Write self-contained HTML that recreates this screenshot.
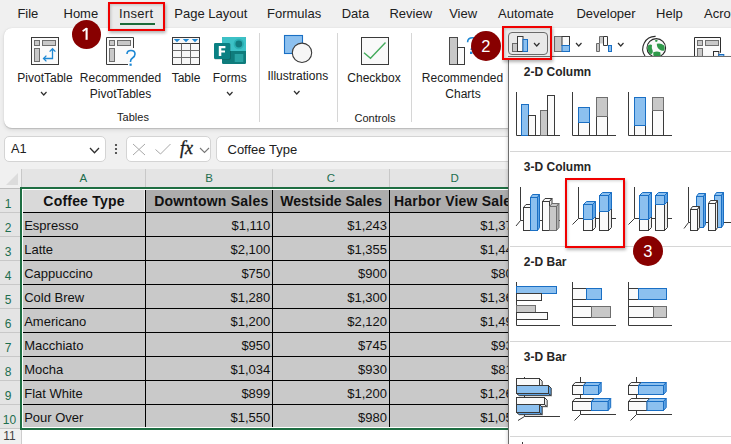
<!DOCTYPE html>
<html><head><meta charset="utf-8"><style>
html,body{margin:0;padding:0;}
body{width:731px;height:444px;overflow:hidden;position:relative;font-family:"Liberation Sans", sans-serif;background:#f0f0f0;}
.t{position:absolute;white-space:nowrap;font-family:"Liberation Sans", sans-serif;}
svg{overflow:visible}
</style></head><body>
<div style="position:absolute;left:0;top:0;width:731px;height:444px;background:#f0f0f0"></div>
<div class="t" style="left:17.40px;top:6.90px;font-size:13px;line-height:13px;color:#202020;font-weight:400;">File</div>
<div class="t" style="left:63.50px;top:6.90px;font-size:13px;line-height:13px;color:#202020;font-weight:400;">Home</div>
<div class="t" style="left:118.90px;top:6.90px;font-size:13px;line-height:13px;color:#202020;font-weight:400;">Insert</div>
<div class="t" style="left:174.30px;top:6.90px;font-size:13px;line-height:13px;color:#202020;font-weight:400;">Page Layout</div>
<div class="t" style="left:267.00px;top:6.90px;font-size:13px;line-height:13px;color:#202020;font-weight:400;">Formulas</div>
<div class="t" style="left:341.70px;top:6.90px;font-size:13px;line-height:13px;color:#202020;font-weight:400;">Data</div>
<div class="t" style="left:389.40px;top:6.90px;font-size:13px;line-height:13px;color:#202020;font-weight:400;">Review</div>
<div class="t" style="left:449.20px;top:6.90px;font-size:13px;line-height:13px;color:#202020;font-weight:400;">View</div>
<div class="t" style="left:498.10px;top:6.90px;font-size:13px;line-height:13px;color:#202020;font-weight:400;">Automate</div>
<div class="t" style="left:576.40px;top:6.90px;font-size:13px;line-height:13px;color:#202020;font-weight:400;">Developer</div>
<div class="t" style="left:656.10px;top:6.90px;font-size:13px;line-height:13px;color:#202020;font-weight:400;">Help</div>
<div class="t" style="left:704.10px;top:6.90px;font-size:13px;line-height:13px;color:#202020;font-weight:400;">Acrobat</div>
<div style="position:absolute;left:4px;top:28px;width:740px;height:100px;background:#fff;border-radius:8px;box-shadow:0 2px 4px rgba(0,0,0,0.10), 0 0.5px 1px rgba(0,0,0,0.16);"></div>
<div style="position:absolute;left:259px;top:33px;width:1px;height:89px;background:#d6d6d6;"></div>
<div style="position:absolute;left:337px;top:33px;width:1px;height:89px;background:#d6d6d6;"></div>
<div style="position:absolute;left:411px;top:33px;width:1px;height:89px;background:#d6d6d6;"></div>
<div class="t" style="left:-15.00px;width:120px;top:71.84px;font-size:12px;line-height:12px;color:#202020;font-weight:400;text-align:center;">PivotTable</div>
<div class="t" style="left:60.50px;width:120px;top:71.84px;font-size:12px;line-height:12px;color:#202020;font-weight:400;text-align:center;">Recommended</div>
<div class="t" style="left:60.50px;width:120px;top:88.24px;font-size:12px;line-height:12px;color:#202020;font-weight:400;text-align:center;">PivotTables</div>
<div class="t" style="left:126.00px;width:120px;top:71.84px;font-size:12px;line-height:12px;color:#202020;font-weight:400;text-align:center;">Table</div>
<div class="t" style="left:169.70px;width:120px;top:71.84px;font-size:12px;line-height:12px;color:#202020;font-weight:400;text-align:center;">Forms</div>
<div class="t" style="left:237.80px;width:120px;top:70.24px;font-size:12px;line-height:12px;color:#202020;font-weight:400;text-align:center;">Illustrations</div>
<div class="t" style="left:314.00px;width:120px;top:71.84px;font-size:12px;line-height:12px;color:#202020;font-weight:400;text-align:center;">Checkbox</div>
<div class="t" style="left:402.50px;width:120px;top:71.84px;font-size:12px;line-height:12px;color:#202020;font-weight:400;text-align:center;">Recommended</div>
<div class="t" style="left:403.00px;width:120px;top:87.84px;font-size:12px;line-height:12px;color:#202020;font-weight:400;text-align:center;">Charts</div>
<div class="t" style="left:73.00px;width:120px;top:112.49px;font-size:11px;line-height:11px;color:#202020;font-weight:400;text-align:center;">Tables</div>
<div class="t" style="left:315.00px;width:120px;top:112.69px;font-size:11px;line-height:11px;color:#202020;font-weight:400;text-align:center;">Controls</div>
<svg style="position:absolute;left:40.45px;top:90.5px" width="7.5" height="5" viewBox="0 0 7.5 5"><path d="M1 1 L3.75 4 L6.5 1" fill="none" stroke="#303030" stroke-width="1.2"/></svg>
<svg style="position:absolute;left:225.95px;top:90.5px" width="7.5" height="5" viewBox="0 0 7.5 5"><path d="M1 1 L3.75 4 L6.5 1" fill="none" stroke="#303030" stroke-width="1.2"/></svg>
<svg style="position:absolute;left:293.45px;top:89.5px" width="7.5" height="5" viewBox="0 0 7.5 5"><path d="M1 1 L3.75 4 L6.5 1" fill="none" stroke="#303030" stroke-width="1.2"/></svg>
<svg style="position:absolute;left:31px;top:37px" width="28" height="28" viewBox="0 0 28 28"><rect x="0.5" y="0.5" width="27" height="27" fill="#fafafa" stroke="#3a3a3a"/>
<rect x="3.5" y="3.5" width="5" height="5" fill="#c8c8c8" stroke="#6e6e6e"/>
<rect x="11.5" y="3.5" width="13" height="5" fill="#c8c8c8" stroke="#6e6e6e"/>
<rect x="3.5" y="11.5" width="5" height="13" fill="#c8c8c8" stroke="#6e6e6e"/>
<path d="M12.5 21.5 H21.5 V11.8 M18.6 14.6 L21.5 11.7 L24.4 14.6 M15.4 18.6 L12.5 21.5 L15.4 24.4" fill="none" stroke="#1e88d4" stroke-width="1.3"/></svg>
<svg style="position:absolute;left:106px;top:37px" width="32" height="31" viewBox="0 0 32 31"><path d="M27.5 11 V0.5 H0.5 V27.5 H22" fill="#fafafa" stroke="#3a3a3a"/>
<rect x="3.5" y="3.5" width="5" height="5" fill="#c8c8c8" stroke="#6e6e6e"/>
<rect x="11.5" y="3.5" width="13" height="5" fill="#c8c8c8" stroke="#6e6e6e"/>
<rect x="3.5" y="11.5" width="5" height="13" fill="#c8c8c8" stroke="#6e6e6e"/>
<path d="M21 17 Q21 13.5 25 13.5 Q29 13.5 29 17 Q29 19.5 26.5 21 Q24.5 22.3 24.5 24.5 V25" fill="none" stroke="#1e88d4" stroke-width="1.6"/>
<rect x="23.5" y="26.6" width="2.2" height="2.2" fill="#1e88d4"/></svg>
<svg style="position:absolute;left:172px;top:37px" width="28" height="28" viewBox="0 0 28 28"><rect x="0.5" y="0.5" width="27" height="27" fill="#f7f7f7" stroke="#3a3a3a"/>
<path d="M0.5 6.5 H27.5" stroke="#3a3a3a"/>
<path d="M9.5 6.5 V27.5 M18.5 6.5 V27.5 M0.5 13.5 H27.5 M0.5 20.5 H27.5" stroke="#6a6a6a"/>
<path d="M1.8 2 H8.2 L5 5.3Z M10.8 2 H17.2 L14 5.3Z M19.8 2 H26.2 L23 5.3Z" fill="#1e88d4"/></svg>
<svg style="position:absolute;left:213px;top:36px" width="34" height="29" viewBox="0 0 34 29"><rect x="9" y="1" width="24" height="27" rx="1.2" fill="#0f7c7c"/>
<path d="M10.2 1 H31.8 A1.2 1.2 0 0 1 33 2.2 V15 H9 V2.2 A1.2 1.2 0 0 1 10.2 1Z" fill="#3cc1c6"/>
<circle cx="25.8" cy="8" r="5.2" fill="#2ab0b4"/>
<circle cx="25.8" cy="8" r="3.4" fill="#127c80"/>
<rect x="21.7" y="18" width="8.6" height="8" fill="#28a3a3"/>
<rect x="1.6" y="7.6" width="16" height="16" rx="1.2" fill="rgba(0,0,0,0.25)"/><rect x="1" y="7" width="16" height="16" rx="1.2" fill="#0a8083"/>
<path d="M5.8 10 H12.4 V12.2 H8.3 V14.4 H12 V16.5 H8.3 V20.1 H5.8Z" fill="#fff"/></svg>
<svg style="position:absolute;left:283px;top:34px" width="30" height="30" viewBox="0 0 30 30"><rect x="1.5" y="1.5" width="18" height="18" fill="#8cc0ef" stroke="#1a6fc4" stroke-width="1.1"/>
<circle cx="19" cy="18.8" r="9.7" fill="#f6f6f6" stroke="#3a3a3a" stroke-width="1.1"/></svg>
<svg style="position:absolute;left:361px;top:37px" width="28" height="28" viewBox="0 0 28 28"><rect x="0.5" y="0.5" width="27" height="27" fill="#f9f9f9" stroke="#3a3a3a"/>
<path d="M3 15.8 L9.5 21.3 L24.5 5.5" fill="none" stroke="#44aa5c" stroke-width="1.4"/></svg>
<svg style="position:absolute;left:448px;top:36px" width="34" height="30" viewBox="0 0 34 30"><rect x="1.5" y="1.5" width="8" height="27" fill="#c8c8c8" stroke="#4a4a4a"/>
<rect x="9.5" y="11.5" width="7" height="17" fill="#fafafa" stroke="#3a3a3a"/>
<path d="M19.6 6.3 Q19.6 1.8 24.5 1.8 Q29.5 1.8 29.5 6 Q29.5 8.8 26.5 10.3 Q23.2 12 23.2 14" fill="none" stroke="#1e88d4" stroke-width="1.6"/>
<rect x="22" y="15.6" width="2.4" height="2.4" fill="#1e88d4"/></svg>
<svg style="position:absolute;left:553px;top:35px" width="18" height="18" viewBox="0 0 18 18"><rect x="1.5" y="1.5" width="8" height="15" fill="#c8c8c8" stroke="#6a6a6a"/>
<rect x="9" y="1.5" width="7.5" height="9" fill="#fafafa" stroke="#3a3a3a"/>
<rect x="9" y="10.5" width="7.5" height="6" fill="#8cc0ef" stroke="#1a6fc4"/></svg>
<svg style="position:absolute;left:574.55px;top:41.7px" width="7.5" height="5" viewBox="0 0 7.5 5"><path d="M1 1 L3.75 4 L6.5 1" fill="none" stroke="#303030" stroke-width="1.2"/></svg>
<svg style="position:absolute;left:595px;top:35px" width="18" height="18" viewBox="0 0 18 18"><path d="M1.5 16.5 V8.5 H4.5 V16.5Z" fill="#c8c8c8" stroke="#6a6a6a"/>
<path d="M4.5 8.5 V1.5 H8.5 V8.5" fill="#c8c8c8" stroke="#6a6a6a"/>
<path d="M8.5 1.5 H12.5 V10.5 H8.5Z" fill="#fafafa" stroke="#3a3a3a"/>
<rect x="13.5" y="10.5" width="3" height="6" fill="#8cc0ef" stroke="#1a6fc4"/></svg>
<svg style="position:absolute;left:616.55px;top:41.7px" width="7.5" height="5" viewBox="0 0 7.5 5"><path d="M1 1 L3.75 4 L6.5 1" fill="none" stroke="#303030" stroke-width="1.2"/></svg>
<svg style="position:absolute;left:641px;top:34px" width="28" height="24" viewBox="0 0 28 24"><path d="M14.6 2.4 A12.5 12.5 0 0 0 4 22" fill="none" stroke="#2a2a2a" stroke-width="1.1"/>
<circle cx="15.3" cy="13.9" r="9.3" fill="#fafafa" stroke="#2a2a2a" stroke-width="1.1"/>
<path d="M7 11.5 Q9.5 9.8 11 11 Q10.2 14 11.8 17 Q12.2 19.5 10 20.5 Q7 18.5 6.5 15Z M15.8 9.8 Q19.5 8.5 23.2 11.5 Q24.3 14.5 23.3 16.5 Q20.5 17.2 18.5 15.5 Q15.8 14 15.8 9.8Z M12.3 18.2 Q16 17 19.3 18.2 Q20.3 21 18.5 23.5 Q14.5 24 12.3 21.5Z M14.2 6 Q16 5.3 16.8 6.8 Q15.8 8.6 14.2 7.6Z" fill="#2f9a4a"/></svg>
<svg style="position:absolute;left:693px;top:36px" width="36" height="24" viewBox="0 0 36 24"><path d="M27.5 16.8 V1.5 H1.5 V25.5" fill="#fafafa" stroke="#2e2e2e"/>
<rect x="4.5" y="4.5" width="5" height="5" fill="#c8c8c8" stroke="#6e6e6e"/>
<rect x="12.5" y="4.5" width="13" height="5" fill="#c8c8c8" stroke="#6e6e6e"/>
<rect x="4.5" y="12.5" width="5" height="12" fill="#c8c8c8" stroke="#6e6e6e"/>
<rect x="20.5" y="15.5" width="5.3" height="9" fill="#fafafa" stroke="#2e2e2e"/>
<rect x="25.8" y="18.5" width="5" height="6" fill="#8cc0ef" stroke="#1a6fc4"/></svg>
<div style="position:absolute;left:4.3px;top:136px;width:101.3px;height:26px;background:#fff;border:1px solid #d4d4d4;border-radius:5px;box-sizing:border-box;"></div>
<div class="t" style="left:11.00px;top:143.06px;font-size:12.8px;line-height:12.8px;color:#202020;font-weight:400;">A1</div>
<svg style="position:absolute;left:89.1px;top:147.0px" width="11" height="6.8" viewBox="0 0 11 6.8"><path d="M1 1 L5.5 5.8 L10 1" fill="none" stroke="#303030" stroke-width="1.3"/></svg>
<svg style="position:absolute;left:114px;top:143px" width="4" height="12" viewBox="0 0 4 12"><circle cx="2" cy="2" r="1.1" fill="#333"/><circle cx="2" cy="6" r="1.1" fill="#333"/><circle cx="2" cy="10" r="1.1" fill="#333"/></svg>
<div style="position:absolute;left:126.3px;top:136px;width:85px;height:26px;background:#fff;border:1px solid #d4d4d4;border-radius:5px;box-sizing:border-box;"></div>
<svg style="position:absolute;left:132px;top:143px" width="14" height="13" viewBox="0 0 14 13"><path d="M1 1 L13 12 M13 1 L1 12" stroke="#a8a8a8" stroke-width="1"/></svg>
<svg style="position:absolute;left:154px;top:143px" width="18" height="13" viewBox="0 0 18 13"><path d="M1.5 6.5 L6.5 11 L16.5 1" fill="none" stroke="#a8a8a8" stroke-width="1"/></svg>
<div class="t" style="left:180px;top:139px;font-family:'Liberation Serif',serif;font-style:italic;font-size:18px;line-height:18px;color:#1a1a1a;-webkit-text-stroke:0.35px #1a1a1a">fx</div>
<svg style="position:absolute;left:199.1px;top:146.95px" width="11" height="6.5" viewBox="0 0 11 6.5"><path d="M1 1 L5.5 5.5 L10 1" fill="none" stroke="#777" stroke-width="1.1"/></svg>
<div style="position:absolute;left:216.3px;top:136px;width:600px;height:26px;background:#fff;border:1px solid #d4d4d4;border-radius:5px;box-sizing:border-box;"></div>
<div class="t" style="left:227.50px;top:142.90px;font-size:13px;line-height:13px;color:#202020;font-weight:400;">Coffee Type</div>
<div style="position:absolute;left:0px;top:169px;width:731px;height:19px;background:#e4e4e4;"></div>
<div style="position:absolute;left:0px;top:169px;width:21px;height:19px;background:#f0f0f0;"></div>
<svg style="position:absolute;left:6px;top:173px" width="13" height="12" viewBox="0 0 13 12"><path d="M12 0 V12 H0Z" fill="#dcdcdc"/></svg>
<div style="position:absolute;left:145px;top:169px;width:1px;height:19px;background:#c8c8c8;"></div>
<div class="t" style="left:63.25px;width:40px;top:173.27px;font-size:11.5px;line-height:11.5px;color:#1e6e4e;font-weight:400;text-align:center;">A</div>
<div style="position:absolute;left:272px;top:169px;width:1px;height:19px;background:#c8c8c8;"></div>
<div class="t" style="left:189.00px;width:40px;top:173.27px;font-size:11.5px;line-height:11.5px;color:#1e6e4e;font-weight:400;text-align:center;">B</div>
<div style="position:absolute;left:389px;top:169px;width:1px;height:19px;background:#c8c8c8;"></div>
<div class="t" style="left:311.00px;width:40px;top:173.27px;font-size:11.5px;line-height:11.5px;color:#1e6e4e;font-weight:400;text-align:center;">C</div>
<div style="position:absolute;left:520px;top:169px;width:1px;height:19px;background:#c8c8c8;"></div>
<div class="t" style="left:434.75px;width:40px;top:173.27px;font-size:11.5px;line-height:11.5px;color:#1e6e4e;font-weight:400;text-align:center;">D</div>
<div style="position:absolute;left:21px;top:169px;width:1px;height:19px;background:#c8c8c8;"></div>
<div style="position:absolute;left:0px;top:188px;width:21px;height:256px;background:#e4e4e4;"></div>
<div style="position:absolute;left:0px;top:428px;width:21px;height:16px;background:#f0f0f0;"></div>
<div style="position:absolute;left:21px;top:429px;width:1px;height:15px;background:#cdcdcd;"></div>
<div style="position:absolute;left:0px;top:188px;width:21px;height:1px;background:#c8c8c8;"></div>
<div class="t" style="left:-1.80px;width:20px;top:197.84px;font-size:12px;line-height:12px;color:#1e6e4e;font-weight:400;text-align:center;">1</div>
<div style="position:absolute;left:0px;top:212px;width:21px;height:1px;background:#c8c8c8;"></div>
<div class="t" style="left:-1.80px;width:20px;top:221.84px;font-size:12px;line-height:12px;color:#1e6e4e;font-weight:400;text-align:center;">2</div>
<div style="position:absolute;left:0px;top:236px;width:21px;height:1px;background:#c8c8c8;"></div>
<div class="t" style="left:-1.80px;width:20px;top:245.84px;font-size:12px;line-height:12px;color:#1e6e4e;font-weight:400;text-align:center;">3</div>
<div style="position:absolute;left:0px;top:260px;width:21px;height:1px;background:#c8c8c8;"></div>
<div class="t" style="left:-1.80px;width:20px;top:269.84px;font-size:12px;line-height:12px;color:#1e6e4e;font-weight:400;text-align:center;">4</div>
<div style="position:absolute;left:0px;top:284px;width:21px;height:1px;background:#c8c8c8;"></div>
<div class="t" style="left:-1.80px;width:20px;top:293.84px;font-size:12px;line-height:12px;color:#1e6e4e;font-weight:400;text-align:center;">5</div>
<div style="position:absolute;left:0px;top:308px;width:21px;height:1px;background:#c8c8c8;"></div>
<div class="t" style="left:-1.80px;width:20px;top:317.84px;font-size:12px;line-height:12px;color:#1e6e4e;font-weight:400;text-align:center;">6</div>
<div style="position:absolute;left:0px;top:332px;width:21px;height:1px;background:#c8c8c8;"></div>
<div class="t" style="left:-1.80px;width:20px;top:341.84px;font-size:12px;line-height:12px;color:#1e6e4e;font-weight:400;text-align:center;">7</div>
<div style="position:absolute;left:0px;top:356px;width:21px;height:1px;background:#c8c8c8;"></div>
<div class="t" style="left:-1.80px;width:20px;top:365.84px;font-size:12px;line-height:12px;color:#1e6e4e;font-weight:400;text-align:center;">8</div>
<div style="position:absolute;left:0px;top:380px;width:21px;height:1px;background:#c8c8c8;"></div>
<div class="t" style="left:-1.80px;width:20px;top:389.84px;font-size:12px;line-height:12px;color:#1e6e4e;font-weight:400;text-align:center;">9</div>
<div style="position:absolute;left:0px;top:404px;width:21px;height:1px;background:#c8c8c8;"></div>
<div class="t" style="left:-0.50px;width:20px;top:413.84px;font-size:12px;line-height:12px;color:#1e6e4e;font-weight:400;text-align:center;">10</div>
<div style="position:absolute;left:0px;top:428px;width:21px;height:1px;background:#c8c8c8;"></div>
<div class="t" style="left:-0.50px;width:20px;top:430.44px;font-size:12px;line-height:12px;color:#404040;font-weight:400;text-align:center;">11</div>
<div style="position:absolute;left:0px;top:188px;width:21px;height:1px;background:#bdbdbd;"></div>
<div style="position:absolute;left:22px;top:188px;width:709px;height:256px;background:#fff;"></div>
<div style="position:absolute;left:23px;top:190px;width:122px;height:22px;background:#d9d9d9;border-right:1px solid #e9e9e9;box-sizing:border-box;"></div>
<div style="position:absolute;left:146px;top:190px;width:400px;height:22px;background:#adadad;"></div>
<div style="position:absolute;left:23px;top:213px;width:500px;height:214px;background:#c9c9c9;"></div>
<div style="position:absolute;left:23px;top:212px;width:500px;height:1px;background:#000;"></div>
<div style="position:absolute;left:23px;top:236px;width:500px;height:1px;background:#000;"></div>
<div style="position:absolute;left:23px;top:260px;width:500px;height:1px;background:#000;"></div>
<div style="position:absolute;left:23px;top:284px;width:500px;height:1px;background:#000;"></div>
<div style="position:absolute;left:23px;top:308px;width:500px;height:1px;background:#000;"></div>
<div style="position:absolute;left:23px;top:332px;width:500px;height:1px;background:#000;"></div>
<div style="position:absolute;left:23px;top:356px;width:500px;height:1px;background:#000;"></div>
<div style="position:absolute;left:23px;top:380px;width:500px;height:1px;background:#000;"></div>
<div style="position:absolute;left:23px;top:404px;width:500px;height:1px;background:#000;"></div>
<div style="position:absolute;left:145.0px;top:190px;width:1px;height:237px;background:#000;"></div>
<div style="position:absolute;left:272.0px;top:190px;width:1px;height:237px;background:#000;"></div>
<div style="position:absolute;left:389.0px;top:190px;width:1px;height:237px;background:#000;"></div>
<div style="position:absolute;left:20px;top:187px;width:520px;height:2px;background:#1e6e42;"></div>
<div style="position:absolute;left:20px;top:187px;width:2px;height:243px;background:#1e6e42;"></div>
<div style="position:absolute;left:20px;top:428px;width:520px;height:2px;background:#1e6e42;"></div>
<div class="t" style="left:22.00px;width:124px;top:193.85px;font-size:14px;line-height:14px;color:#111;font-weight:700;text-align:center;letter-spacing:0.2px;">Coffee Type</div>
<div class="t" style="left:141.30px;width:140px;top:193.85px;font-size:14px;line-height:14px;color:#111;font-weight:700;text-align:center;letter-spacing:0.22px;">Downtown Sales</div>
<div class="t" style="left:261.20px;width:140px;top:193.85px;font-size:14px;line-height:14px;color:#111;font-weight:700;text-align:center;">Westside Sales</div>
<div class="t" style="left:394.00px;top:193.85px;font-size:14px;line-height:14px;color:#111;font-weight:700;letter-spacing:0.2px;">Harbor View Sales</div>
<div class="t" style="left:24.20px;top:219.00px;font-size:13px;line-height:13px;color:#111;font-weight:400;">Espresso</div>
<div class="t" style="right:460.70px;top:219.00px;font-size:13px;line-height:13px;color:#111;font-weight:400;text-align:right;">$1,110</div>
<div class="t" style="right:344.00px;top:219.00px;font-size:13px;line-height:13px;color:#111;font-weight:400;text-align:right;">$1,243</div>
<div class="t" style="right:211.00px;top:219.00px;font-size:13px;line-height:13px;color:#111;font-weight:400;text-align:right;">$1,375</div>
<div class="t" style="left:24.20px;top:243.00px;font-size:13px;line-height:13px;color:#111;font-weight:400;">Latte</div>
<div class="t" style="right:460.70px;top:243.00px;font-size:13px;line-height:13px;color:#111;font-weight:400;text-align:right;">$2,100</div>
<div class="t" style="right:344.00px;top:243.00px;font-size:13px;line-height:13px;color:#111;font-weight:400;text-align:right;">$1,355</div>
<div class="t" style="right:211.00px;top:243.00px;font-size:13px;line-height:13px;color:#111;font-weight:400;text-align:right;">$1,440</div>
<div class="t" style="left:24.20px;top:267.00px;font-size:13px;line-height:13px;color:#111;font-weight:400;">Cappuccino</div>
<div class="t" style="right:460.70px;top:267.00px;font-size:13px;line-height:13px;color:#111;font-weight:400;text-align:right;">$750</div>
<div class="t" style="right:344.00px;top:267.00px;font-size:13px;line-height:13px;color:#111;font-weight:400;text-align:right;">$900</div>
<div class="t" style="right:211.00px;top:267.00px;font-size:13px;line-height:13px;color:#111;font-weight:400;text-align:right;">$800</div>
<div class="t" style="left:24.20px;top:291.00px;font-size:13px;line-height:13px;color:#111;font-weight:400;">Cold Brew</div>
<div class="t" style="right:460.70px;top:291.00px;font-size:13px;line-height:13px;color:#111;font-weight:400;text-align:right;">$1,280</div>
<div class="t" style="right:344.00px;top:291.00px;font-size:13px;line-height:13px;color:#111;font-weight:400;text-align:right;">$1,300</div>
<div class="t" style="right:211.00px;top:291.00px;font-size:13px;line-height:13px;color:#111;font-weight:400;text-align:right;">$1,360</div>
<div class="t" style="left:24.20px;top:315.00px;font-size:13px;line-height:13px;color:#111;font-weight:400;">Americano</div>
<div class="t" style="right:460.70px;top:315.00px;font-size:13px;line-height:13px;color:#111;font-weight:400;text-align:right;">$1,200</div>
<div class="t" style="right:344.00px;top:315.00px;font-size:13px;line-height:13px;color:#111;font-weight:400;text-align:right;">$2,120</div>
<div class="t" style="right:211.00px;top:315.00px;font-size:13px;line-height:13px;color:#111;font-weight:400;text-align:right;">$1,490</div>
<div class="t" style="left:24.20px;top:339.00px;font-size:13px;line-height:13px;color:#111;font-weight:400;">Macchiato</div>
<div class="t" style="right:460.70px;top:339.00px;font-size:13px;line-height:13px;color:#111;font-weight:400;text-align:right;">$950</div>
<div class="t" style="right:344.00px;top:339.00px;font-size:13px;line-height:13px;color:#111;font-weight:400;text-align:right;">$745</div>
<div class="t" style="right:211.00px;top:339.00px;font-size:13px;line-height:13px;color:#111;font-weight:400;text-align:right;">$930</div>
<div class="t" style="left:24.20px;top:363.00px;font-size:13px;line-height:13px;color:#111;font-weight:400;">Mocha</div>
<div class="t" style="right:460.70px;top:363.00px;font-size:13px;line-height:13px;color:#111;font-weight:400;text-align:right;">$1,034</div>
<div class="t" style="right:344.00px;top:363.00px;font-size:13px;line-height:13px;color:#111;font-weight:400;text-align:right;">$930</div>
<div class="t" style="right:211.00px;top:363.00px;font-size:13px;line-height:13px;color:#111;font-weight:400;text-align:right;">$810</div>
<div class="t" style="left:24.20px;top:387.00px;font-size:13px;line-height:13px;color:#111;font-weight:400;">Flat White</div>
<div class="t" style="right:460.70px;top:387.00px;font-size:13px;line-height:13px;color:#111;font-weight:400;text-align:right;">$899</div>
<div class="t" style="right:344.00px;top:387.00px;font-size:13px;line-height:13px;color:#111;font-weight:400;text-align:right;">$1,200</div>
<div class="t" style="right:211.00px;top:387.00px;font-size:13px;line-height:13px;color:#111;font-weight:400;text-align:right;">$1,260</div>
<div class="t" style="left:24.20px;top:411.00px;font-size:13px;line-height:13px;color:#111;font-weight:400;">Pour Over</div>
<div class="t" style="right:460.70px;top:411.00px;font-size:13px;line-height:13px;color:#111;font-weight:400;text-align:right;">$1,550</div>
<div class="t" style="right:344.00px;top:411.00px;font-size:13px;line-height:13px;color:#111;font-weight:400;text-align:right;">$980</div>
<div class="t" style="right:211.00px;top:411.00px;font-size:13px;line-height:13px;color:#111;font-weight:400;text-align:right;">$1,050</div>
<div style="position:absolute;left:508px;top:56px;width:240px;height:400px;background:#fff;border-left:1px solid #6e6e6e;border-top:1px solid #6e6e6e;box-sizing:border-box;box-shadow:-1px 1px 3px rgba(0,0,0,0.15);"></div>
<div class="t" style="left:523.80px;top:65.54px;font-size:12px;line-height:12px;color:#262626;font-weight:700;">2-D Column</div>
<div class="t" style="left:523.80px;top:160.54px;font-size:12px;line-height:12px;color:#262626;font-weight:700;">3-D Column</div>
<div class="t" style="left:523.80px;top:255.54px;font-size:12px;line-height:12px;color:#262626;font-weight:700;">2-D Bar</div>
<div class="t" style="left:523.80px;top:350.94px;font-size:12px;line-height:12px;color:#262626;font-weight:700;">3-D Bar</div>
<div style="position:absolute;left:510px;top:151px;width:221px;height:1px;background:#d6d6d6;"></div>
<div style="position:absolute;left:510px;top:246px;width:221px;height:1px;background:#d6d6d6;"></div>
<div style="position:absolute;left:510px;top:341px;width:221px;height:1px;background:#d6d6d6;"></div>
<div style="position:absolute;left:510px;top:436px;width:221px;height:1px;background:#d6d6d6;"></div>
<svg style="position:absolute;left:0;top:0" width="731" height="444" viewBox="0 0 731 444"><path d="M516.5 92 V135.5 H560" fill="none" stroke="#3a3a3a" stroke-width="1"/><rect x="521.5" y="104.5" width="7" height="31" fill="#8cc0ef" stroke="#1a6fc4"/><rect x="528.5" y="115.5" width="7" height="20" fill="#fafafa" stroke="#3a3a3a"/><rect x="540.5" y="110.5" width="7" height="25" fill="#c8c8c8" stroke="#6e6e6e"/><rect x="547.5" y="95.5" width="7" height="40" fill="#fafafa" stroke="#3a3a3a"/><path d="M572.5 92 V135.5 H616" fill="none" stroke="#3a3a3a" stroke-width="1"/><rect x="578.5" y="122.5" width="11" height="13" fill="#fafafa" stroke="#3a3a3a"/><rect x="578.5" y="107.5" width="11" height="15" fill="#8cc0ef" stroke="#1a6fc4"/><rect x="596.5" y="116.5" width="11" height="19" fill="#fafafa" stroke="#3a3a3a"/><rect x="596.5" y="97.5" width="11" height="19" fill="#c8c8c8" stroke="#6e6e6e"/><path d="M628.5 92 V135.5 H672" fill="none" stroke="#3a3a3a" stroke-width="1"/><rect x="634.5" y="125.5" width="11" height="10" fill="#fafafa" stroke="#3a3a3a"/><rect x="634.5" y="97.5" width="11" height="28" fill="#8cc0ef" stroke="#1a6fc4"/><rect x="652.5" y="110.5" width="11" height="25" fill="#fafafa" stroke="#3a3a3a"/><rect x="652.5" y="97.5" width="11" height="13" fill="#c8c8c8" stroke="#6e6e6e"/><path d="M516.5 282 V325.5 H560" fill="none" stroke="#3a3a3a" stroke-width="1"/><rect x="516.5" y="286.5" width="40" height="7" fill="#8cc0ef" stroke="#1a6fc4"/><rect x="516.5" y="293.5" width="25" height="7" fill="#fafafa" stroke="#3a3a3a"/><rect x="516.5" y="305.5" width="19" height="7" fill="#c8c8c8" stroke="#6e6e6e"/><rect x="516.5" y="312.5" width="31" height="7" fill="#fafafa" stroke="#3a3a3a"/><path d="M572.5 282 V325.5 H616" fill="none" stroke="#3a3a3a" stroke-width="1"/><rect x="572.5" y="288.5" width="14" height="11" fill="#fafafa" stroke="#3a3a3a"/><rect x="586.5" y="288.5" width="15" height="11" fill="#8cc0ef" stroke="#1a6fc4"/><rect x="572.5" y="306.5" width="19" height="11" fill="#fafafa" stroke="#3a3a3a"/><rect x="591.5" y="306.5" width="19" height="11" fill="#c8c8c8" stroke="#6e6e6e"/><path d="M628.5 282 V325.5 H672" fill="none" stroke="#3a3a3a" stroke-width="1"/><rect x="628.5" y="288.5" width="10" height="11" fill="#fafafa" stroke="#3a3a3a"/><rect x="638.5" y="288.5" width="28" height="11" fill="#8cc0ef" stroke="#1a6fc4"/><rect x="628.5" y="306.5" width="25" height="11" fill="#fafafa" stroke="#3a3a3a"/><rect x="653.5" y="306.5" width="13" height="11" fill="#c8c8c8" stroke="#6e6e6e"/><path d="M520.5 187 V220.5 H560 M520.5 220.5 L516 226" fill="none" stroke="#3a3a3a" stroke-width="1"/><path d="M523.5 207.5 L526.0 204.5 H533.0 L530.5 207.5Z" fill="#fafafa" stroke="#3a3a3a" stroke-width="1"/><path d="M530.5 207.5 L533.0 204.5 V227.5 L530.5 230.5Z" fill="#ececec" stroke="#3a3a3a" stroke-width="1"/><rect x="523.5" y="207.5" width="7" height="23" fill="#fafafa" stroke="#3a3a3a"/><path d="M530.5 197.5 L532.5 194.5 H539.5 L537.5 197.5Z" fill="#8cc0ef" stroke="#1a6fc4" stroke-width="1"/><path d="M537.5 197.5 L539.5 194.5 V227.5 L537.5 230.5Z" fill="#5da2e3" stroke="#1a6fc4" stroke-width="1"/><rect x="530.5" y="197.5" width="7" height="33" fill="#8cc0ef" stroke="#1a6fc4"/><path d="M542.5 201.5 L545.0 198.5 H552.0 L549.5 201.5Z" fill="#fafafa" stroke="#3a3a3a" stroke-width="1"/><path d="M549.5 201.5 L552.0 198.5 V227.5 L549.5 230.5Z" fill="#ececec" stroke="#3a3a3a" stroke-width="1"/><rect x="542.5" y="201.5" width="7" height="29" fill="#fafafa" stroke="#3a3a3a"/><path d="M549.5 206.5 L552.0 203.5 H559.0 L556.5 206.5Z" fill="#c8c8c8" stroke="#6e6e6e" stroke-width="1"/><path d="M556.5 206.5 L559.0 203.5 V227.5 L556.5 230.5Z" fill="#b0b0b0" stroke="#6e6e6e" stroke-width="1"/><rect x="549.5" y="206.5" width="7" height="24" fill="#c8c8c8" stroke="#6e6e6e"/><path d="M578.5 187 V218.5 H616 M578.5 218.5 L572.5 224.5" fill="none" stroke="#3a3a3a" stroke-width="1"/><path d="M583.5 219.5 L586.5 216.5 H595.5 L592.5 219.5Z" fill="#fafafa" stroke="#3a3a3a" stroke-width="1"/><path d="M592.5 219.5 L595.5 216.5 V227.5 L592.5 230.5Z" fill="#ececec" stroke="#3a3a3a" stroke-width="1"/><rect x="583.5" y="219.5" width="9" height="11" fill="#fafafa" stroke="#3a3a3a"/><path d="M583.5 204.5 L586.5 201.5 H595.5 L592.5 204.5Z" fill="#8cc0ef" stroke="#1a6fc4" stroke-width="1"/><path d="M592.5 204.5 L595.5 201.5 V216.5 L592.5 219.5Z" fill="#5da2e3" stroke="#1a6fc4" stroke-width="1"/><rect x="583.5" y="204.5" width="9" height="15" fill="#8cc0ef" stroke="#1a6fc4"/><path d="M599.5 211.5 L602.5 208.5 H611.5 L608.5 211.5Z" fill="#fafafa" stroke="#3a3a3a" stroke-width="1"/><path d="M608.5 211.5 L611.5 208.5 V227.5 L608.5 230.5Z" fill="#ececec" stroke="#3a3a3a" stroke-width="1"/><rect x="599.5" y="211.5" width="9" height="19" fill="#fafafa" stroke="#3a3a3a"/><path d="M599.5 195.5 L602.5 192.5 H611.5 L608.5 195.5Z" fill="#8cc0ef" stroke="#1a6fc4" stroke-width="1"/><path d="M608.5 195.5 L611.5 192.5 V208.5 L608.5 211.5Z" fill="#5da2e3" stroke="#1a6fc4" stroke-width="1"/><rect x="599.5" y="195.5" width="9" height="16" fill="#8cc0ef" stroke="#1a6fc4"/><path d="M634.5 187 V218.5 H672 M634.5 218.5 L628.5 224.5" fill="none" stroke="#3a3a3a" stroke-width="1"/><path d="M639.5 219.5 L642.5 216.5 H651.5 L648.5 219.5Z" fill="#fafafa" stroke="#3a3a3a" stroke-width="1"/><path d="M648.5 219.5 L651.5 216.5 V227.5 L648.5 230.5Z" fill="#ececec" stroke="#3a3a3a" stroke-width="1"/><rect x="639.5" y="219.5" width="9" height="11" fill="#fafafa" stroke="#3a3a3a"/><path d="M639.5 195.5 L642.5 192.5 H651.5 L648.5 195.5Z" fill="#8cc0ef" stroke="#1a6fc4" stroke-width="1"/><path d="M648.5 195.5 L651.5 192.5 V216.5 L648.5 219.5Z" fill="#5da2e3" stroke="#1a6fc4" stroke-width="1"/><rect x="639.5" y="195.5" width="9" height="24" fill="#8cc0ef" stroke="#1a6fc4"/><path d="M655.5 204.5 L658.5 201.5 H667.5 L664.5 204.5Z" fill="#fafafa" stroke="#3a3a3a" stroke-width="1"/><path d="M664.5 204.5 L667.5 201.5 V227.5 L664.5 230.5Z" fill="#ececec" stroke="#3a3a3a" stroke-width="1"/><rect x="655.5" y="204.5" width="9" height="26" fill="#fafafa" stroke="#3a3a3a"/><path d="M655.5 195.5 L658.5 192.5 H667.5 L664.5 195.5Z" fill="#8cc0ef" stroke="#1a6fc4" stroke-width="1"/><path d="M664.5 195.5 L667.5 192.5 V201.5 L664.5 204.5Z" fill="#5da2e3" stroke="#1a6fc4" stroke-width="1"/><rect x="655.5" y="195.5" width="9" height="9" fill="#8cc0ef" stroke="#1a6fc4"/><path d="M688.5 187 V222.5 H740 M688.5 222.5 L684 228.5" fill="none" stroke="#3a3a3a" stroke-width="1"/><path d="M696.5 196.5 L698.5 193.5 H705.5 L703.5 196.5Z" fill="#8cc0ef" stroke="#1a6fc4" stroke-width="1"/><path d="M703.5 196.5 L705.5 193.5 V224.5 L703.5 227.5Z" fill="#5da2e3" stroke="#1a6fc4" stroke-width="1"/><rect x="696.5" y="196.5" width="7" height="31" fill="#8cc0ef" stroke="#1a6fc4"/><path d="M714.5 195.5 L716.5 192.5 H723.5 L721.5 195.5Z" fill="#8cc0ef" stroke="#1a6fc4" stroke-width="1"/><path d="M721.5 195.5 L723.5 192.5 V224.5 L721.5 227.5Z" fill="#5da2e3" stroke="#1a6fc4" stroke-width="1"/><rect x="714.5" y="195.5" width="7" height="32" fill="#8cc0ef" stroke="#1a6fc4"/><path d="M690.5 209.5 L692.5 206.5 H699.5 L697.5 209.5Z" fill="#fafafa" stroke="#3a3a3a" stroke-width="1"/><path d="M697.5 209.5 L699.5 206.5 V227.5 L697.5 230.5Z" fill="#ececec" stroke="#3a3a3a" stroke-width="1"/><rect x="690.5" y="209.5" width="7" height="21" fill="#fafafa" stroke="#3a3a3a"/><path d="M708.5 203.5 L710.5 200.5 H717.5 L715.5 203.5Z" fill="#fafafa" stroke="#3a3a3a" stroke-width="1"/><path d="M715.5 203.5 L717.5 200.5 V227.5 L715.5 230.5Z" fill="#ececec" stroke="#3a3a3a" stroke-width="1"/><rect x="708.5" y="203.5" width="7" height="27" fill="#fafafa" stroke="#3a3a3a"/><path d="M524.5 377 V416.5 H560 M524.5 416.5 L518 420.5" fill="none" stroke="#3a3a3a" stroke-width="1"/><path d="M516.5 385.5 L519.2 387.66 H542.2 L539.5 385.5Z" fill="#ececec" stroke="#3a3a3a" stroke-width="1"/><path d="M539.5 378.5 L542.2 381.2 V387.66 L539.5 385.5Z" fill="#ececec" stroke="#3a3a3a" stroke-width="1"/><rect x="516.5" y="378.5" width="23" height="7" fill="#fafafa" stroke="#3a3a3a"/><path d="M516.5 393.5 L519.2 395.66 H551.2 L548.5 393.5Z" fill="#5da2e3" stroke="#3a3a3a" stroke-width="1"/><path d="M548.5 385.5 L551.2 388.2 V395.66 L548.5 393.5Z" fill="#5da2e3" stroke="#3a3a3a" stroke-width="1"/><rect x="516.5" y="385.5" width="32" height="8" fill="#8cc0ef" stroke="#3a3a3a"/><path d="M516.5 404.5 L519.2 406.66 H547.2 L544.5 404.5Z" fill="#ececec" stroke="#3a3a3a" stroke-width="1"/><path d="M544.5 397.5 L547.2 400.2 V406.66 L544.5 404.5Z" fill="#ececec" stroke="#3a3a3a" stroke-width="1"/><rect x="516.5" y="397.5" width="28" height="7" fill="#fafafa" stroke="#3a3a3a"/><path d="M516.5 412.5 L519.2 414.66 H542.2 L539.5 412.5Z" fill="#5da2e3" stroke="#3a3a3a" stroke-width="1"/><path d="M539.5 404.5 L542.2 407.2 V414.66 L539.5 412.5Z" fill="#5da2e3" stroke="#3a3a3a" stroke-width="1"/><rect x="516.5" y="404.5" width="23" height="8" fill="#8cc0ef" stroke="#3a3a3a"/><path d="M580.5 377 V414.5 H616 M580.5 414.5 L574.5 420.5" fill="none" stroke="#3a3a3a" stroke-width="1"/><path d="M572.5 385.5 L575.2 382.5 H586.2 L583.5 385.5Z" fill="#fafafa" stroke="#3a3a3a" stroke-width="1"/><path d="M583.5 385.5 L586.2 382.5 V391.5 L583.5 394.5Z" fill="#ececec" stroke="#3a3a3a" stroke-width="1"/><rect x="572.5" y="385.5" width="11" height="9" fill="#fafafa" stroke="#3a3a3a"/><path d="M583.5 385.5 L586.2 382.5 H601.2 L598.5 385.5Z" fill="#8cc0ef" stroke="#1a6fc4" stroke-width="1"/><path d="M598.5 385.5 L601.2 382.5 V391.5 L598.5 394.5Z" fill="#5da2e3" stroke="#1a6fc4" stroke-width="1"/><rect x="583.5" y="385.5" width="15" height="9" fill="#8cc0ef" stroke="#1a6fc4"/><path d="M572.5 401.5 L575.2 398.5 H594.2 L591.5 401.5Z" fill="#fafafa" stroke="#3a3a3a" stroke-width="1"/><path d="M591.5 401.5 L594.2 398.5 V407.5 L591.5 410.5Z" fill="#ececec" stroke="#3a3a3a" stroke-width="1"/><rect x="572.5" y="401.5" width="19" height="9" fill="#fafafa" stroke="#3a3a3a"/><path d="M591.5 401.5 L594.2 398.5 H610.7 L608.0 401.5Z" fill="#8cc0ef" stroke="#1a6fc4" stroke-width="1"/><path d="M608.0 401.5 L610.7 398.5 V407.5 L608.0 410.5Z" fill="#5da2e3" stroke="#1a6fc4" stroke-width="1"/><rect x="591.5" y="401.5" width="16.5" height="9" fill="#8cc0ef" stroke="#1a6fc4"/><path d="M636.5 377 V414.5 H672 M636.5 414.5 L630.5 420.5" fill="none" stroke="#3a3a3a" stroke-width="1"/><path d="M628.5 385.5 L631.2 382.5 H641.2 L638.5 385.5Z" fill="#fafafa" stroke="#3a3a3a" stroke-width="1"/><path d="M638.5 385.5 L641.2 382.5 V391.5 L638.5 394.5Z" fill="#ececec" stroke="#3a3a3a" stroke-width="1"/><rect x="628.5" y="385.5" width="10" height="9" fill="#fafafa" stroke="#3a3a3a"/><path d="M638.5 385.5 L641.2 382.5 H666.2 L663.5 385.5Z" fill="#8cc0ef" stroke="#1a6fc4" stroke-width="1"/><path d="M663.5 385.5 L666.2 382.5 V391.5 L663.5 394.5Z" fill="#5da2e3" stroke="#1a6fc4" stroke-width="1"/><rect x="638.5" y="385.5" width="25" height="9" fill="#8cc0ef" stroke="#1a6fc4"/><path d="M628.5 401.5 L631.2 398.5 H649.7 L647.0 401.5Z" fill="#fafafa" stroke="#3a3a3a" stroke-width="1"/><path d="M647.0 401.5 L649.7 398.5 V407.5 L647.0 410.5Z" fill="#ececec" stroke="#3a3a3a" stroke-width="1"/><rect x="628.5" y="401.5" width="18.5" height="9" fill="#fafafa" stroke="#3a3a3a"/><path d="M647 401.5 L649.7 398.5 H666.2 L663.5 401.5Z" fill="#8cc0ef" stroke="#1a6fc4" stroke-width="1"/><path d="M663.5 401.5 L666.2 398.5 V407.5 L663.5 410.5Z" fill="#5da2e3" stroke="#1a6fc4" stroke-width="1"/><rect x="647" y="401.5" width="16.5" height="9" fill="#8cc0ef" stroke="#1a6fc4"/></svg>
<div style="position:absolute;left:522px;top:442px;width:1px;height:2px;background:#3a3a3a;"></div>
<div style="position:absolute;left:108.2px;top:2px;width:57px;height:29px;border:2px solid #f00000;box-sizing:border-box;background:#ebebeb;box-shadow:1px 2px 3px rgba(0,0,0,0.3), inset 1px 1px 3px rgba(0,0,0,0.18);"></div>
<div class="t" style="left:119.00px;top:6.90px;font-size:13px;line-height:13px;color:#202020;font-weight:400;letter-spacing:0.3px;">Insert</div>
<div style="position:absolute;left:119.5px;top:23px;width:35px;height:2px;background:#1e6b3a;"></div>
<div style="position:absolute;left:502.2px;top:26px;width:49.6px;height:34px;background:#ebebeb;"></div>
<div style="position:absolute;left:508px;top:56px;width:43px;height:1px;background:#6e6e6e;"></div>
<div style="position:absolute;left:507.8px;top:31.9px;width:40px;height:23.5px;background:#e9e9e9;border:1px solid #6a6a6a;border-radius:4px;box-sizing:border-box;"></div>
<svg style="position:absolute;left:511px;top:35px" width="19" height="18" viewBox="0 0 19 18"><rect x="1.5" y="8.5" width="5" height="8" fill="#c8c8c8" stroke="#6a6a6a"/>
<rect x="6.5" y="1.5" width="5.5" height="15" fill="#fafafa" stroke="#3a3a3a"/>
<rect x="12" y="4.5" width="4.5" height="12" fill="#8cc0ef" stroke="#1a6fc4"/></svg>
<svg style="position:absolute;left:532.55px;top:41.5px" width="7.5" height="5" viewBox="0 0 7.5 5"><path d="M1 1 L3.75 4 L6.5 1" fill="none" stroke="#303030" stroke-width="1.2"/></svg>
<div style="position:absolute;left:502.2px;top:26px;width:49.6px;height:34px;border:2px solid #f00000;box-sizing:border-box;box-shadow:1px 2px 3px rgba(0,0,0,0.3), inset 1px 1px 3px rgba(0,0,0,0.18);"></div>
<div style="position:absolute;left:565.4px;top:177.6px;width:59.5px;height:70px;border:2px solid #f00000;box-sizing:border-box;box-shadow:inset 1px 1px 3px rgba(0,0,0,0.18), 1px 2px 3px rgba(0,0,0,0.3);"></div>
<div style="position:absolute;left:71.75px;top:19.75px;width:29.5px;height:29.5px;border-radius:50%;background:#880000;"></div>
<div class="t" style="left:72.05px;width:29.5px;top:26.53px;font-size:16.5px;line-height:16.5px;color:#fff;font-weight:400;text-align:center;"></div>
<svg style="position:absolute;left:80px;top:26px" width="12" height="16" viewBox="0 0 12 16"><path d="M6.6 2 V13.8" stroke="#fff" stroke-width="2.1"/><path d="M6.8 2.3 L2.6 5.3" stroke="#fff" stroke-width="1.7"/></svg>
<div style="position:absolute;left:470.6px;top:30.700000000000003px;width:30px;height:30px;border-radius:50%;background:#880000;"></div>
<div class="t" style="left:470.90px;width:30px;top:37.73px;font-size:16.5px;line-height:16.5px;color:#fff;font-weight:400;text-align:center;">2</div>
<div style="position:absolute;left:632.5px;top:236.3px;width:30px;height:30px;border-radius:50%;background:#880000;"></div>
<div class="t" style="left:632.80px;width:30px;top:243.33px;font-size:16.5px;line-height:16.5px;color:#fff;font-weight:400;text-align:center;">3</div>
</body></html>
